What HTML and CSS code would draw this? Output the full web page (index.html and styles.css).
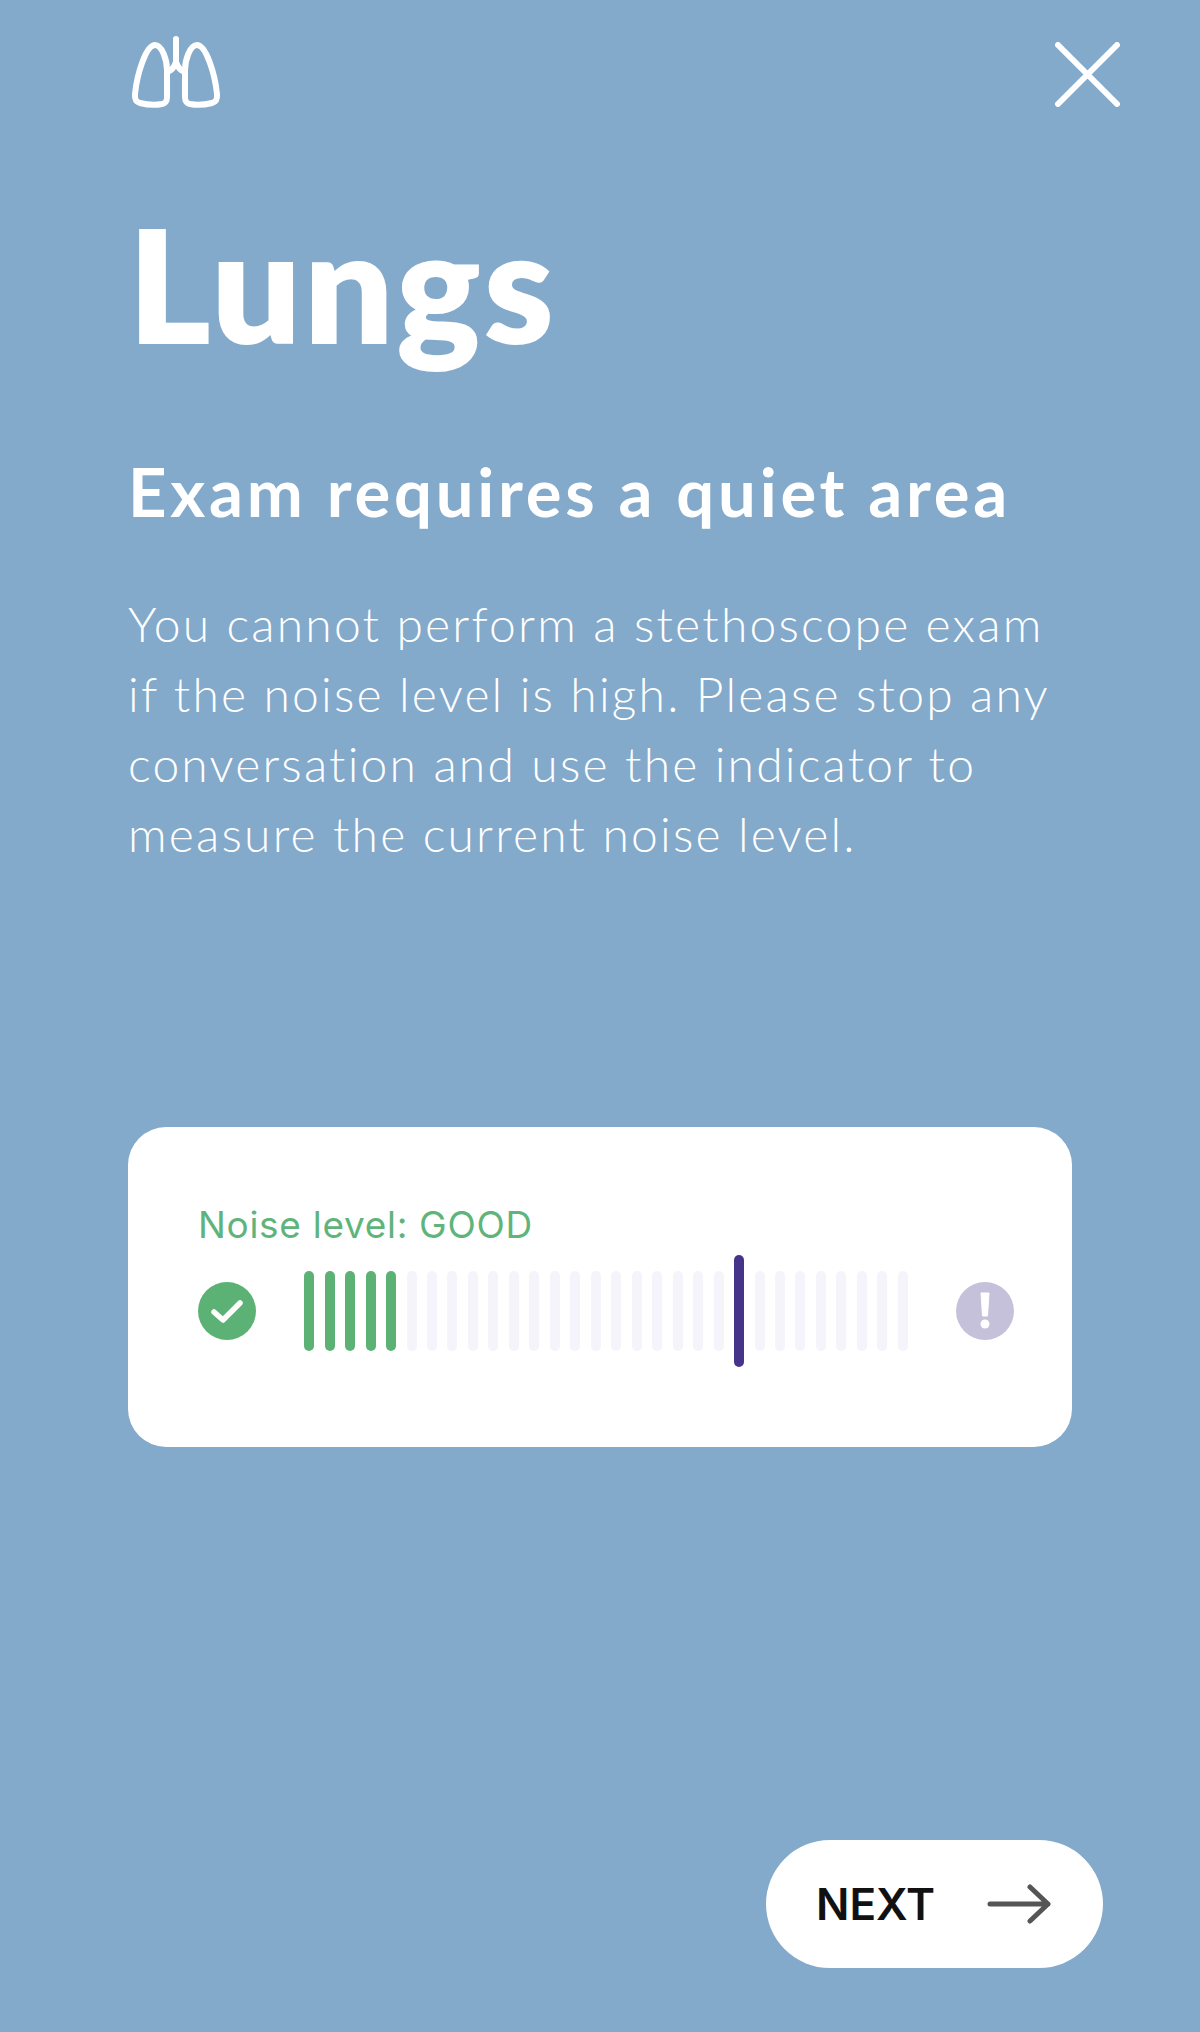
FILE: index.html
```html
<!DOCTYPE html>
<html lang="en">
<head>
  <meta charset="UTF-8">
  <meta name="viewport" content="width=device-width, initial-scale=1.0">
  <title>Lungs</title>
  <link rel="stylesheet" href="styles.css">
</head>
<body>
  <div class="screen">
    <div class="top-bar">
      <svg class="lungs-icon" viewBox="0 0 96 80" fill="none" stroke="#fff" stroke-width="6" stroke-linecap="round" stroke-linejoin="round">
        <path d="M27 11C18 11 9 40 7 60C6.500 66 8 68 12 69C20 71 29 71 34 70C38 69 39 67 39 63L39 36C39 26 34 11 27 11Z"/>
        <path d="M69 11C78 11 87 40 89 60C89.500 66 88 68 84 69C76 71 67 71 62 70C58 69 57 67 57 63L57 36C57 26 62 11 69 11Z"/>
        <path d="M48 5V28M39 38C43 37 46 34 48 28C50 34 53 37 57 38"/>
      </svg>
      <svg class="close-icon" viewBox="0 0 65 65" fill="none" stroke="#fff" stroke-width="6" stroke-linecap="round">
        <path d="M3 3L62 62M62 3L3 62"/>
      </svg>
    </div>

    <h1>Lungs</h1>
    <h2>Exam requires a quiet area</h2>
    <p class="intro">You cannot perform a stethoscope exam<br>if the noise level is high. Please stop any<br>conversation and use the indicator to<br>measure the current noise level.</p>

    <div class="card">
      <div class="noise-label">Noise level: GOOD</div>
      <div class="meter">
        <svg class="status-icon" viewBox="0 0 58 58">
          <circle cx="29" cy="29" r="29" fill="#5bb274"/>
          <path d="M16 30L25 38L42 21" fill="none" stroke="#fff" stroke-width="5.500" stroke-linecap="round" stroke-linejoin="round"/>
        </svg>
        <div class="bars">
          <span class="bar on"></span><span class="bar on"></span><span class="bar on"></span><span class="bar on"></span><span class="bar on"></span>
          <span class="bar"></span><span class="bar"></span><span class="bar"></span><span class="bar"></span><span class="bar"></span>
          <span class="bar"></span><span class="bar"></span><span class="bar"></span><span class="bar"></span><span class="bar"></span>
          <span class="bar"></span><span class="bar"></span><span class="bar"></span><span class="bar"></span><span class="bar"></span>
          <span class="bar"></span><span class="bar limit"></span><span class="bar"></span><span class="bar"></span><span class="bar"></span>
          <span class="bar"></span><span class="bar"></span><span class="bar"></span><span class="bar"></span><span class="bar"></span>
        </div>
        <svg class="status-icon" viewBox="0 0 58 58">
          <circle cx="29" cy="29" r="29" fill="#c5c1da"/>
          <path d="M25 11H33L31.500 34H26.500Z" fill="#fff" stroke="#fff" stroke-width="1" stroke-linejoin="round"/>
          <circle cx="29" cy="42" r="4.500" fill="#fff"/>
        </svg>
      </div>
    </div>

    <button class="next-btn">
      NEXT
      <svg class="arrow-icon" viewBox="0 0 64 40" fill="none" stroke="#555" stroke-width="5" stroke-linecap="round" stroke-linejoin="round">
        <path d="M3 20H61M43 3L61 20L43 37"/>
      </svg>
    </button>
  </div>
</body>
</html>
```

FILE: styles.css
```css
body {
  margin: 0;
  padding: 0;
  background-color: #83a9cb;
  font-family: Lato, sans-serif;
}

.screen {
  height: 2032px;
  box-sizing: border-box;
  padding: 37px 80px 64px 128px;
  display: flex;
  flex-direction: column;
  color: #fff;
  overflow: hidden;
}

.top-bar {
  display: flex;
  justify-content: space-between;
  align-items: flex-start;
}

.lungs-icon {
  width: 96px;
  height: 80px;
  margin-top: -3px;
}

.close-icon {
  width: 65px;
  height: 65px;
  margin-top: 5px;
}

h1 {
  margin: 78px 0 0;
  font-size: 158px;
  line-height: 182px;
  font-weight: 800;
  letter-spacing: 2.500px;
}

h2 {
  margin: 77px 0 0;
  font-size: 67px;
  line-height: 80px;
  font-weight: 700;
  letter-spacing: 3.750px;
}

.intro {
  margin: 58px 0 0;
  font-size: 48px;
  line-height: 70px;
  font-weight: 300;
  letter-spacing: 2.200px;
  white-space: nowrap;
}

.card {
  width: 944px;
  height: 320px;
  box-sizing: border-box;
  margin-top: 258px;
  padding: 76px 58px 0 70px;
  background-color: #fff;
  border-radius: 38px;
}

.noise-label {
  font-family: Inter, sans-serif;
  font-size: 37px;
  line-height: 44px;
  letter-spacing: 0.700px;
  color: #5fb47c;
}

.meter {
  display: flex;
  align-items: center;
  justify-content: space-between;
  margin-top: 8px;
  height: 112px;
}

.status-icon {
  width: 58px;
  height: 58px;
  flex-shrink: 0;
}

.bars {
  display: flex;
  align-items: center;
  gap: 10.480px;
  margin-left: 48px;
  margin-right: 48px;
}

.bar {
  width: 10px;
  height: 80px;
  border-radius: 5px;
  background-color: #f4f4fa;
}

.bar.on {
  background-color: #5bb274;
}

.bar.limit {
  height: 112px;
  background-color: #46338a;
}

.next-btn {
  display: flex;
  align-items: center;
  justify-content: space-between;
  align-self: flex-end;
  width: 337px;
  height: 128px;
  box-sizing: border-box;
  margin-top: auto;
  margin-right: 17px;
  padding: 0 52px 0 50px;
  border: none;
  border-radius: 64px;
  background-color: #fff;
  color: #111;
  font-family: Inter, sans-serif;
  font-size: 44px;
  font-weight: 600;
  cursor: pointer;
}

.arrow-icon {
  width: 64px;
  height: 40px;
}
```
